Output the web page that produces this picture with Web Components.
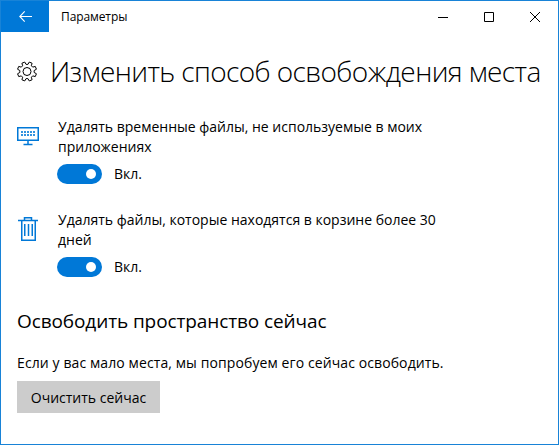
<!DOCTYPE html>
<html lang="ru">
<head>
<meta charset="utf-8">
<title>Параметры</title>
<style>
  html, body { margin: 0; height: 100%; background: #fff; }
  body { font-family: "Open Sans", "Noto Sans", sans-serif; color: #000; }
</style>
</head>
<body>
<settings-window>
  <title-bar slot="top" caption="Параметры"></title-bar>
  <page-heading>Изменить способ освобождения места</page-heading>
  <toggle-row icon="keyboard">Удалять временные файлы, не используемые в моих приложениях</toggle-row>
  <toggle-row icon="trash" class="second">Удалять файлы, которые находятся в корзине более 30 дней</toggle-row>
  <free-section heading="Освободить пространство сейчас" button="Очистить сейчас">Если у вас мало места, мы попробуем его сейчас освободить.</free-section>
</settings-window>

<script>
class settingsWindow extends HTMLElement {
  constructor() {
    super();
    this.attachShadow({ mode: 'open' });
    this.shadowRoot.innerHTML = `
    <style>
    :host{
      display: flex;
      flex-direction: column;
      box-sizing: border-box;
      width: 559px;
      height: 445px;
      border: 1px solid #1883d7;
      background: #fff;
      overflow: hidden;
    }
    .content{
      display: flex;
      flex-direction: column;
    }
    </style>
    <slot name="top"></slot>
    <div class="content"><slot></slot></div>
    `;
  }
}

class titleBar extends HTMLElement {
  constructor() {
    super();
    this.attachShadow({ mode: 'open' });
  }
  connectedCallback() {
    this.shadowRoot.innerHTML = `
    <style>
    :host{
      display: flex;
      align-items: center;
      height: 31px;
      flex: none;
    }
    .back{
      display: flex;
      align-items: center;
      justify-content: center;
      width: 48px;
      height: 31px;
      background: #0078d7;
    }
    .caption{
      margin-left: 12px;
      flex: 1;
      font-size: 12px;
      line-height: 31px;
      letter-spacing: -0.1px;
    }
    .controls{
      display: flex;
    }
    .controls div{
      display: flex;
      align-items: center;
      justify-content: center;
      width: 46px;
      height: 31px;
    }
    svg{ display: block; }
    </style>
    <div class="back">
      <svg width="13" height="11" viewBox="0 0 13 11" fill="none" stroke="#fff" stroke-width="1.1">
        <path d="M5.700 .4 .8 5.500l4.900 5.100M.8 5.500H13"/>
      </svg>
    </div>
    <div class="caption">${this.getAttribute('caption')}</div>
    <div class="controls">
      <div><svg width="10" height="10" viewBox="0 0 10 10"><path d="M0 5.500h10" stroke="#000"/></svg></div>
      <div><svg width="10" height="10" viewBox="0 0 10 10" fill="none"><path d="M.5.5h9v9h-9z" stroke="#000"/></svg></div>
      <div><svg width="10" height="10" viewBox="0 0 10 10" fill="none"><path d="M0 0l10 10M10 0 0 10" stroke="#000"/></svg></div>
    </div>
    `;
  }
}

// 8 teeth, rotated so a notch sits on top
function gearPath(cx, cy, outer, root) {
  const pt = (deg, r) => {
    const a = deg * Math.PI / 180;
    return `${(cx + r * Math.cos(a)).toFixed(2)} ${(cy + r * Math.sin(a)).toFixed(2)}`;
  };
  const parts = [];
  for (let k = 0; k < 8; k++) {
    const a = 22.5 + 45 * k;
    parts.push(pt(a - 15, root), pt(a - 9, outer), pt(a + 9, outer), pt(a + 15, root));
  }
  return `M${parts.join('L')}Z`;
}

class pageHeading extends HTMLElement {
  constructor() {
    super();
    this.attachShadow({ mode: 'open' });
    this.shadowRoot.innerHTML = `
    <style>
    :host{
      display: flex;
      align-items: center;
      height: 44px;
      margin-top: 17px;
      padding-left: 16px;
    }
    svg{ flex: none; display: block; }
    .text{
      margin-left: 12px;
      font-size: 28px;
      font-weight: 300;
      letter-spacing: -0.6px;
      white-space: nowrap;
    }
    </style>
    <svg width="21" height="21" viewBox="0 0 21 21" fill="none" stroke="#000" stroke-width="1">
      <circle cx="10" cy="10.500" r="4"/>
      <path d="${gearPath(10, 10.5, 9.7, 7.2)}"/>
    </svg>
    <div class="text"><slot></slot></div>
    `;
  }
}

const rowIcons = {
  keyboard: `<svg width="22" height="22" viewBox="0 0 22 22" fill="none" stroke="#0078d7" stroke-width="1.500">
    <path d="M.75 3.750h20.500v12.500H.75zM11 17v3M6.500 20.500h9"/>
    <path d="M4 8h14M4 11h14" stroke-width="2" stroke-dasharray="2 1" opacity=".8"/>
  </svg>`,
  trash: `<svg width="22" height="24" viewBox="0 0 22 24" fill="none" stroke="#0078d7" stroke-width="1.500">
    <path d="M1 3.500h20M7.500 3V.75h7V3M4.750 3.500v19.750h13.500V3.500M7.750 7v12M11.500 7v12M15.250 7v12"/>
  </svg>`,
};

class toggleRow extends HTMLElement {
  constructor() {
    super();
    this.attachShadow({ mode: 'open' });
  }
  connectedCallback() {
    this.shadowRoot.innerHTML = `
    <style>
    :host{
      display: flex;
      padding-left: 16px;
      margin-top: 24px;
    }
    :host(.second){ margin-top: 26px; }
    .icon{
      flex: none;
      width: 40px;
      padding-top: 7px;
    }
    svg{ display: block; }
    .label{
      width: 380px;
      margin-left: 1px;
      font-size: 14px;
      line-height: 20px;
    }
    .state{
      display: flex;
      align-items: center;
      margin-top: 7px;
      font-size: 14px;
      line-height: 20px;
    }
    .track{
      display: flex;
      align-items: center;
      justify-content: flex-end;
      box-sizing: border-box;
      width: 45px;
      height: 20px;
      padding-right: 6px;
      border-radius: 10px;
      background: #0078d7;
      margin-right: 12px;
    }
    .knob{
      width: 10px;
      height: 10px;
      border-radius: 50%;
      background: #fff;
    }
    </style>
    <div class="icon">${rowIcons[this.getAttribute('icon')]}</div>
    <div>
      <div class="label"><slot></slot></div>
      <div class="state"><span class="track"><span class="knob"></span></span>Вкл.</div>
    </div>
    `;
  }
}

class freeSection extends HTMLElement {
  constructor() {
    super();
    this.attachShadow({ mode: 'open' });
  }
  connectedCallback() {
    this.shadowRoot.innerHTML = `
    <style>
    :host{
      display: block;
      padding-left: 16px;
      margin-top: 30px;
    }
    h2{
      margin: 0;
      font-size: 19px;
      line-height: 28px;
      font-weight: 400;
      letter-spacing: -0.1px;
    }
    p{
      margin: 18px 0 0;
      font-size: 14px;
      line-height: 20px;
      letter-spacing: 0.1px;
    }
    button{
      display: block;
      width: 143px;
      height: 32px;
      margin-top: 8px;
      padding: 0;
      border: 0;
      background: #ccc;
      color: #000;
      font: inherit;
      font-size: 14px;
    }
    </style>
    <h2>${this.getAttribute('heading')}</h2>
    <p><slot></slot></p>
    <button type="button">${this.getAttribute('button')}</button>
    `;
  }
}

customElements.define('settings-window', settingsWindow);
customElements.define('title-bar', titleBar);
customElements.define('page-heading', pageHeading);
customElements.define('toggle-row', toggleRow);
customElements.define('free-section', freeSection);
</script>
</body>
</html>
